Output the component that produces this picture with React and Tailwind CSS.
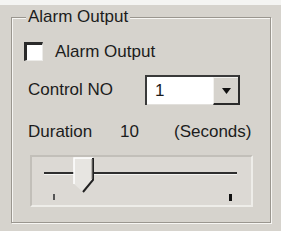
import React from 'react';

//classic win32 style group box with an alarm output setting
export default function App() {
  const font = { fontFamily: '"Liberation Sans", Arial, sans-serif' };

  return (
    <div className="w-[281px] h-[231px] bg-[#f4f4f2] pt-[5px] overflow-hidden" style={font}>
      <div className="h-[226px] bg-[#d6d3cd] pl-[11px] pt-[12px]">
        {/* group box frame */}
        <div className="relative w-[260px] h-[206px] border border-[#9a968f] shadow-[inset_1px_1px_0_#f7f6f3,1px_1px_0_#f7f6f3] text-[17px] leading-[20px] text-[#1c1c1c]">
          <span className="absolute -top-[11px] left-[14px] px-[2px] bg-[#d6d3cd]">Alarm Output</span>

          {/* checkbox row */}
          <div className="mt-[24px] ml-[12px] flex items-center h-[19px]">
            <div className="w-[19px] h-[19px] bg-white border-t-[3px] border-l-[3px] border-r border-b border-t-[#2a2a2a] border-l-[#2a2a2a] border-r-[#ecebe8] border-b-[#ecebe8]" />
            <span className="ml-[12px]">Alarm Output</span>
          </div>

          {/* control number select, dark bottom line only under the button */}
          <div className="mt-[14px] ml-[16px] flex items-center h-[30px]">
            <span className="w-[117px]">Control NO</span>
            <div className="w-[95px] h-[30px] flex items-stretch bg-white border-t-2 border-l-2 border-r-2 border-t-[#3a3a3a] border-l-[#3a3a3a] border-r-[#2a2a2a]">
              <span className="flex-1 pl-[8px] flex items-center border-b border-b-[#e2e0dc]">1</span>
              <div className="w-[25px] bg-[#d6d3cd] flex items-center justify-center border-l border-t border-l-[#f2f1ee] border-t-[#f2f1ee] border-b-2 border-b-[#2a2a2a]">
                <svg width="9" height="6" viewBox="0 0 9 6">
                  <polygon points="0,0 9,0 4.5,6" fill="#111" />
                </svg>
              </div>
            </div>
          </div>

          {/* duration row */}
          <div className="mt-[17px] ml-[16px] flex h-[20px]">
            <span className="w-[92px]">Duration</span>
            <span className="w-[54px]">10</span>
            <span>(Seconds)</span>
          </div>

          {/* slider */}
          <div className="relative mt-[13px] ml-[18px] w-[223px] h-[52px] bg-[#dcd9d4] border-2 border-t-[#c2bfb9] border-l-[#c2bfb9] border-r-[#eeede9] border-b-[#eeede9]">
            <div className="absolute left-[12px] top-[15px] w-[193px] h-[3px] bg-[#2e2e2e] border-b border-b-[#f5f5f2]" />
            <svg className="absolute left-[41px] top-[0px]" width="22" height="37" viewBox="0 0 22 37">
              <polygon points="1,1 20,1 20,23 10,35 1,27" fill="#e7e5e1" />
              <polyline points="1,27 1,1 20,1" fill="none" stroke="#ffffff" strokeWidth="1.5" />
              <polyline points="20,1 20,23 10,35" fill="none" stroke="#222" strokeWidth="2" />
              <polyline points="19,2 19,22" fill="none" stroke="#8a8781" strokeWidth="1" />
            </svg>
            <div className="absolute left-[21px] top-[37px] w-[2px] h-[6px] bg-[#555]" />
            <div className="absolute left-[197px] top-[37px] w-[3px] h-[7px] bg-[#111]" />
          </div>
        </div>
      </div>
    </div>
  );
}
